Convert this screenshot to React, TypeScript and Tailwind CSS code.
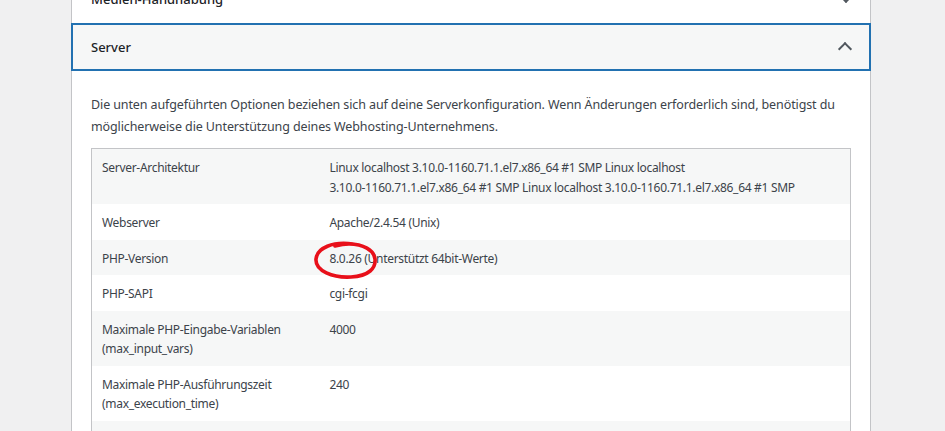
import React from 'react';

type Row = { label: string[]; value: string[] };

const rows: Row[] = [
  {
    label: ['Server-Architektur'],
    value: [
      'Linux localhost 3.10.0-1160.71.1.el7.x86_64 #1 SMP Linux localhost',
      '3.10.0-1160.71.1.el7.x86_64 #1 SMP Linux localhost 3.10.0-1160.71.1.el7.x86_64 #1 SMP',
    ],
  },
  { label: ['Webserver'], value: ['Apache/2.4.54 (Unix)'] },
  { label: ['PHP-Version'], value: ['8.0.26 (Unterstützt 64bit-Werte)'] },
  { label: ['PHP-SAPI'], value: ['cgi-fcgi'] },
  { label: ['Maximale PHP-Eingabe-Variablen', '(max_input_vars)'], value: ['4000'] },
  { label: ['Maximale PHP-Ausführungszeit', '(max_execution_time)'], value: ['240'] },
  { label: ['PHP-Speicherlimit (memory_limit)'], value: ['256M'] },
  { label: ['Maximale Eingabezeit (max_input_time)'], value: ['240'] },
];

const App: React.FC = () => {
  return (
    <div
      className="min-h-screen overflow-hidden bg-[#f0f0f1] text-[#3c434a]"
      style={{ fontFamily: '"Noto Sans", "Open Sans", sans-serif' }}
    >
      <div className="ml-[71px] -mt-[24px] min-h-[480px] w-[800px] border-x border-[#c3c4c7] bg-white">
        {/* Medien-Handhabung (collapsed) */}
        <div className="relative flex h-[47px] items-center pl-[19px] text-[13px] font-medium text-[#1d2327]">
          Medien-Handhabung
          <span className="absolute right-[19px] top-[15px] h-[10px] w-[10px] rotate-45 border-b-2 border-r-2 border-[#50575e]"></span>
        </div>

        {/* Server (expanded) */}
        <div className="relative -mx-px flex h-[48px] items-center border-2 border-[#2271b1] bg-[#f6f7f7] pl-[18px] pt-px text-[13px] font-medium text-[#1d2327]">
          Server
          <span className="absolute right-[19px] top-[19px] h-[10px] w-[10px] -rotate-135 border-b-2 border-r-2 border-[#50575e]"></span>
        </div>

        <div className="px-[19px] pt-[23px]">
          <p className="mb-[10px] text-[12.5px] leading-[22px] tracking-[-0.11px]">
            Die unten aufgeführten Optionen beziehen sich auf deine Serverkonfiguration. Wenn Änderungen erforderlich sind, benötigst du möglicherweise die Unterstützung deines Webhosting-Unternehmens.
          </p>

          <div className="relative border border-[#c3c4c7]">
            <table className="w-full table-fixed border-collapse text-[12px] tracking-[-0.3px]">
              <tbody>
                {rows.map((row, i) => (
                  <tr key={i} className={i % 2 === 0 ? 'bg-[#f6f7f7]' : 'bg-white'}>
                    <td className="w-[30%] px-[10px] pb-[7px] pt-[9px] align-top leading-[19.5px]">
                      {row.label.map((l, j) => (
                        <div key={j}>{l}</div>
                      ))}
                    </td>
                    <td className="px-[10px] pb-[7px] pt-[9px] align-top leading-[19.5px]">
                      {row.value.map((v, j) => (
                        <div key={j} className="whitespace-nowrap">{v}</div>
                      ))}
                    </td>
                  </tr>
                ))}
              </tbody>
            </table>

            {/* hand-drawn annotation */}
            <svg
              className="pointer-events-none absolute left-[221px] top-[91px]"
              width="66"
              height="40"
              viewBox="0 0 66 40"
            >
              <path
                d="M40 4 C 20 1, 4 8, 3 19 C 2 31, 20 38, 38 37 C 56 36, 63 28, 62 19 C 61 10, 50 4, 36 4 C 30 4, 26 5, 22 6"
                fill="none"
                stroke="#e8101a"
                strokeWidth="3.6"
                strokeLinecap="round"
              />
            </svg>
          </div>
        </div>
      </div>
    </div>
  );
};

export default App;
